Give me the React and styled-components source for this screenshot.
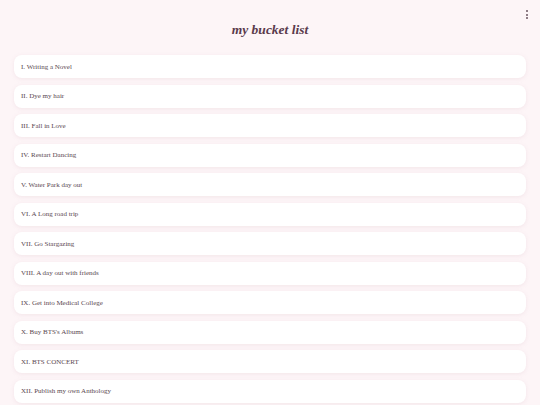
import React from 'react';
import styled, { createGlobalStyle } from 'styled-components';

const GlobalStyle = createGlobalStyle`
  html, body {
    margin: 0;
    padding: 0;
    background: #fdf5f7;
    font-family: "Liberation Serif", "Times New Roman", serif;
  }
`;

const Page = styled.div`
  position: relative;
  width: 540px;
  height: 405px;
  overflow: hidden;
  box-sizing: border-box;
  padding: 0 14px;
`;

const Title = styled.h1`
  margin: 0;
  padding-top: 22px;
  height: 55px;
  box-sizing: border-box;
  text-align: center;
  font-size: 13.5px;
  font-style: italic;
  font-weight: bold;
  color: #5a3a4c;
`;

const Menu = styled.div`
  position: absolute;
  top: 10px;
  right: 12px;
  display: flex;
  flex-direction: column;
  gap: 1.5px;
  span {
    width: 2px;
    height: 2px;
    border-radius: 50%;
    background: #6a5560;
  }
`;

const List = styled.div`
  display: flex;
  flex-direction: column;
  gap: 6.5px;
`;

const Item = styled.div`
  height: 23px;
  flex-shrink: 0;
  display: flex;
  align-items: center;
  padding-left: 7px;
  background: #ffffff;
  border-radius: 8px;
  box-shadow: 0 1px 4px rgba(200, 160, 175, 0.18);
  font-size: 7px;
  color: #5a4850;
`;

const items = [
  'I. Writing a Novel',
  'II. Dye my hair',
  'III. Fall in Love',
  'IV. Restart Dancing',
  'V. Water Park day out',
  'VI. A Long road trip',
  'VII. Go Stargazing',
  'VIII. A day out with friends',
  'IX. Get into Medical College',
  "X. Buy BTS's Albums",
  'XI. BTS CONCERT',
  'XII. Publish my own Anthology',
];

export default function App() {
  return (
    <>
      <GlobalStyle />
      <Page>
        <Menu>
          <span />
          <span />
          <span />
        </Menu>
        <Title>my bucket list</Title>
        <List>
          {items.map((t) => (
            <Item key={t}>{t}</Item>
          ))}
        </List>
      </Page>
    </>
  );
}
